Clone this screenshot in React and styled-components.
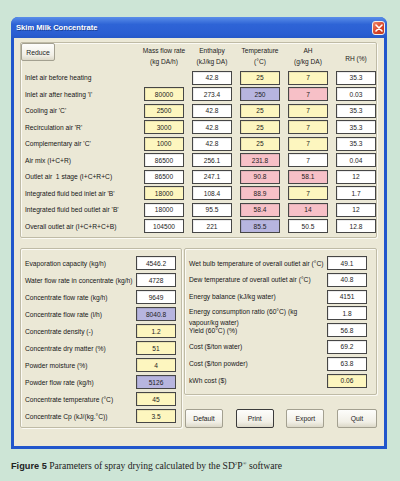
import React from 'react'
import styled, { createGlobalStyle } from 'styled-components'

const GlobalStyle = createGlobalStyle`
  html, body {
    margin: 0;
    background: #cde5d6;
  }
  body {
    font-family: "Liberation Sans", Arial, sans-serif;
  }
`

const Page = styled.div`
  width: 400px;
  height: 481px;
  padding: 17px 0 0 11px;
  box-sizing: border-box;
`

const Window = styled.div`
  width: 376px;
  height: 432px;
  box-sizing: border-box;
  display: flex;
  flex-direction: column;
  background: #2156cc;
  border-radius: 7px 7px 0 0;
  padding: 0 3px 3px;
`

const TitleBar = styled.div`
  height: 21px;
  display: flex;
  align-items: center;
  justify-content: space-between;
  background: linear-gradient(#5a8ee9, #2e64d6 35%, #2a5ed2 80%, #2558c8);
  margin: 0 -3px;
  padding-left: 5px;
  padding-right: 2px;
  border-radius: 7px 7px 0 0;
`

const Title = styled.span`
  color: #fff;
  font-weight: bold;
  font-size: 7.6px;
  text-shadow: 1px 1px 0 rgba(10, 30, 90, 0.5);
`

const Close = styled.div`
  width: 13px;
  height: 14px;
  box-sizing: border-box;
  border: 1px solid #f4efe8;
  border-radius: 3px;
  background: linear-gradient(135deg, #f08a6a, #d8442a 55%, #c23a1e);
  display: flex;
  align-items: center;
  justify-content: center;
`

const Body = styled.div`
  flex: 1;
  background: #ebe8d6;
  padding: 4px 7px 0 6px;
`

const Group = styled.div`
  box-sizing: border-box;
  border: 1px solid #bfbba6;
  box-shadow: inset 1px 1px 0 #fbfaf4, 1px 1px 0 #fbfaf4;
  border-radius: 2px;
  height: ${p => p.$h}px;
  width: ${p => (p.$w ? `${p.$w}px` : 'auto')};
`

const FlowGrid = styled.div`
  display: grid;
  grid-template-columns: 115px repeat(5, 40px);
  grid-template-rows: 25px repeat(10, 14px);
  column-gap: 8px;
  row-gap: 2.5px;
`

const Head = styled.div`
  display: flex;
  flex-direction: column;
  align-items: center;
  justify-content: center;
  font-size: 6.6px;
  line-height: 11px;
  color: #1c1c1c;
  white-space: nowrap;
  padding-top: ${p => p.$pad || 0}px;
`

const Btn = styled.div`
  box-sizing: border-box;
  display: flex;
  align-items: center;
  justify-content: center;
  font-size: 6.8px;
  color: #1c1c1c;
  background: linear-gradient(#fdfdfb, #f1efe6 70%, #dcd8c8);
  border: ${p => (p.$focus ? '1.5px solid #3b3b3b' : '1px solid #a3a090')};
  border-radius: 2px;
  width: ${p => p.$w}px;
  height: ${p => p.$h}px;
`

const Label = styled.div`
  display: flex;
  align-items: ${p => (p.$top ? 'flex-start' : 'center')};
  padding-left: 4px;
  font-size: 6.7px;
  line-height: 11px;
  color: #161616;
  white-space: pre;
  height: 14px;
`

const Field = styled.div`
  box-sizing: border-box;
  height: 14px;
  border: 1px solid #464646;
  box-shadow: inset 1px 1px 0 rgba(0, 0, 0, 0.08);
  background: ${p =>
    ({ y: '#fdf6bf', p: '#b7b5df', r: '#f7c0c7', w: '#ffffff' }[p.$c] || '#fff')};
  display: flex;
  align-items: center;
  justify-content: center;
  font-size: 6.6px;
  color: #1c1c1c;
`

const Lower = styled.div`
  display: flex;
  gap: 2px;
  margin-top: 10px;
`

const ListGrid = styled.div`
  display: grid;
  grid-template-columns: ${p => p.$cols};
  grid-auto-rows: 14px;
  row-gap: ${p => p.$gap}px;
  padding: 7px ${p => p.$pr}px 0 0;
`

const RightCol = styled.div`
  flex: 1;
  display: flex;
  flex-direction: column;
`

const ButtonRow = styled.div`
  display: flex;
  justify-content: space-between;
  margin-top: 14px;
  padding: 0 0 0 1px;
`

const Caption = styled.div`
  margin-top: 11px;
  font-family: "Liberation Serif", "Times New Roman", serif;
  font-size: 9.6px;
  color: #222;
  white-space: nowrap;
`

const CapBold = styled.span`
  font-family: "Liberation Sans", Arial, sans-serif;
  font-weight: bold;
  font-size: 9.2px;
`

const Sup = styled.sup`
  font-size: 5px;
`

const flows = [
  ['Inlet air before heating', null, ['42.8', 'w'], ['25', 'y'], ['7', 'y'], ['35.3', 'w']],
  ["Inlet air after heating 'I'", ['80000', 'y'], ['273.4', 'w'], ['250', 'p'], ['7', 'r'], ['0.03', 'w']],
  ["Cooling air 'C'", ['2500', 'y'], ['42.8', 'w'], ['25', 'y'], ['7', 'y'], ['35.3', 'w']],
  ["Recirculation air 'R'", ['3000', 'y'], ['42.8', 'w'], ['25', 'y'], ['7', 'y'], ['35.3', 'w']],
  ["Complementary air 'C'", ['1000', 'y'], ['42.8', 'w'], ['25', 'y'], ['7', 'y'], ['35.3', 'w']],
  ['Air mix (I+C+R)', ['86500', 'w'], ['256.1', 'w'], ['231.8', 'r'], ['7', 'w'], ['0.04', 'w']],
  ['Outlet air  1 stage (I+C+R+C)', ['86500', 'w'], ['247.1', 'w'], ['90.8', 'r'], ['58.1', 'r'], ['12', 'w']],
  ["Integrated fluid bed inlet air 'B'", ['18000', 'y'], ['108.4', 'w'], ['88.9', 'r'], ['7', 'y'], ['1.7', 'w']],
  ["Integrated fluid bed outlet air 'B'", ['18000', 'w'], ['95.5', 'w'], ['58.4', 'r'], ['14', 'r'], ['12', 'w']],
  ['Overall outlet air (I+C+R+C+B)', ['104500', 'w'], ['221', 'w'], ['85.5', 'p'], ['50.5', 'w'], ['12.8', 'w']],
]

const concentrate = [
  ['Evaporation capacity (kg/h)', '4546.2', 'w'],
  ['Water flow rate in concentrate (kg/h)', '4728', 'w'],
  ['Concentrate flow rate (kg/h)', '9649', 'w'],
  ['Concentrate flow rate (l/h)', '8040.8', 'p'],
  ['Concentrate density (-)', '1.2', 'y'],
  ['Concentrate dry matter (%)', '51', 'y'],
  ['Powder moisture (%)', '4', 'y'],
  ['Powder flow rate (kg/h)', '5126', 'p'],
  ['Concentrate temperature (°C)', '45', 'y'],
  ['Concentrate Cp (kJ/(kg.°C))', '3.5', 'y'],
]

const results = [
  ['Wet bulb temperature of overall outlet air (°C)', '49.1', 'w'],
  ['Dew temperature of overall outlet air (°C)', '40.8', 'w'],
  ['Energy balance (kJ/kg water)', '4151', 'w'],
  ['Energy consumption ratio (60°C) (kg\nvapour/kg water)', '1.8', 'w', true],
  ['Yield (60°C) (%)', '56.8', 'w'],
  ['Cost ($/ton water)', '69.2', 'w'],
  ['Cost ($/ton powder)', '63.8', 'w'],
  ['kWh cost ($)', '0.06', 'y'],
]

const CloseX = () => (
  <svg width="8" height="8" viewBox="0 0 8 8">
    <path d="M1 1 L7 7 M7 1 L1 7" stroke="#fff" strokeWidth="1.6" strokeLinecap="round" />
  </svg>
)

const App = () => {
  return (
    <Page>
      <GlobalStyle />
      <Window>
        <TitleBar>
          <Title>Skim Milk Concentrate</Title>
          <Close><CloseX /></Close>
        </TitleBar>
        <Body>
          <Group $h={196}>
            <FlowGrid>
              <div>
                <Btn $w={34} $h={18}>Reduce</Btn>
              </div>
              <Head><span>Mass flow rate</span><span>(kg DA/h)</span></Head>
              <Head><span>Enthalpy</span><span>(kJ/kg DA)</span></Head>
              <Head><span>Temperature</span><span>(°C)</span></Head>
              <Head><span>AH</span><span>(g/kg DA)</span></Head>
              <Head $pad={5}><span>RH (%)</span></Head>
              {flows.map(([label, ...cells]) => (
                <React.Fragment key={label}>
                  <Label>{label}</Label>
                  {cells.map((cell, i) =>
                    cell ? <Field key={i} $c={cell[1]}>{cell[0]}</Field> : <div key={i} />
                  )}
                </React.Fragment>
              ))}
            </FlowGrid>
          </Group>
          <Lower>
            <Group $w={162} $h={180}>
              <ListGrid $cols="115px 40px" $gap={3} $pr={0}>
                {concentrate.map(([label, v, c]) => (
                  <React.Fragment key={label}>
                    <Label>{label}</Label>
                    <Field $c={c}>{v}</Field>
                  </React.Fragment>
                ))}
              </ListGrid>
            </Group>
            <RightCol>
              <Group $h={147}>
                <ListGrid $cols="1fr 40px" $gap={2.8} $pr={9}>
                  {results.map(([label, v, c, top]) => (
                    <React.Fragment key={label}>
                      <Label $top={top}>{label}</Label>
                      <Field $c={c}>{v}</Field>
                    </React.Fragment>
                  ))}
                </ListGrid>
              </Group>
              <ButtonRow>
                <Btn $w={38} $h={19}>Default</Btn>
                <Btn $w={38} $h={19} $focus>Print</Btn>
                <Btn $w={38} $h={19}>Export</Btn>
                <Btn $w={40} $h={19}>Quit</Btn>
              </ButtonRow>
            </RightCol>
          </Lower>
        </Body>
      </Window>
      <Caption>
        <CapBold>Figure 5</CapBold> Parameters of spray drying calculated by the SD<Sup>2</Sup>P<Sup>®</Sup> software
      </Caption>
    </Page>
  )
}

export default App
